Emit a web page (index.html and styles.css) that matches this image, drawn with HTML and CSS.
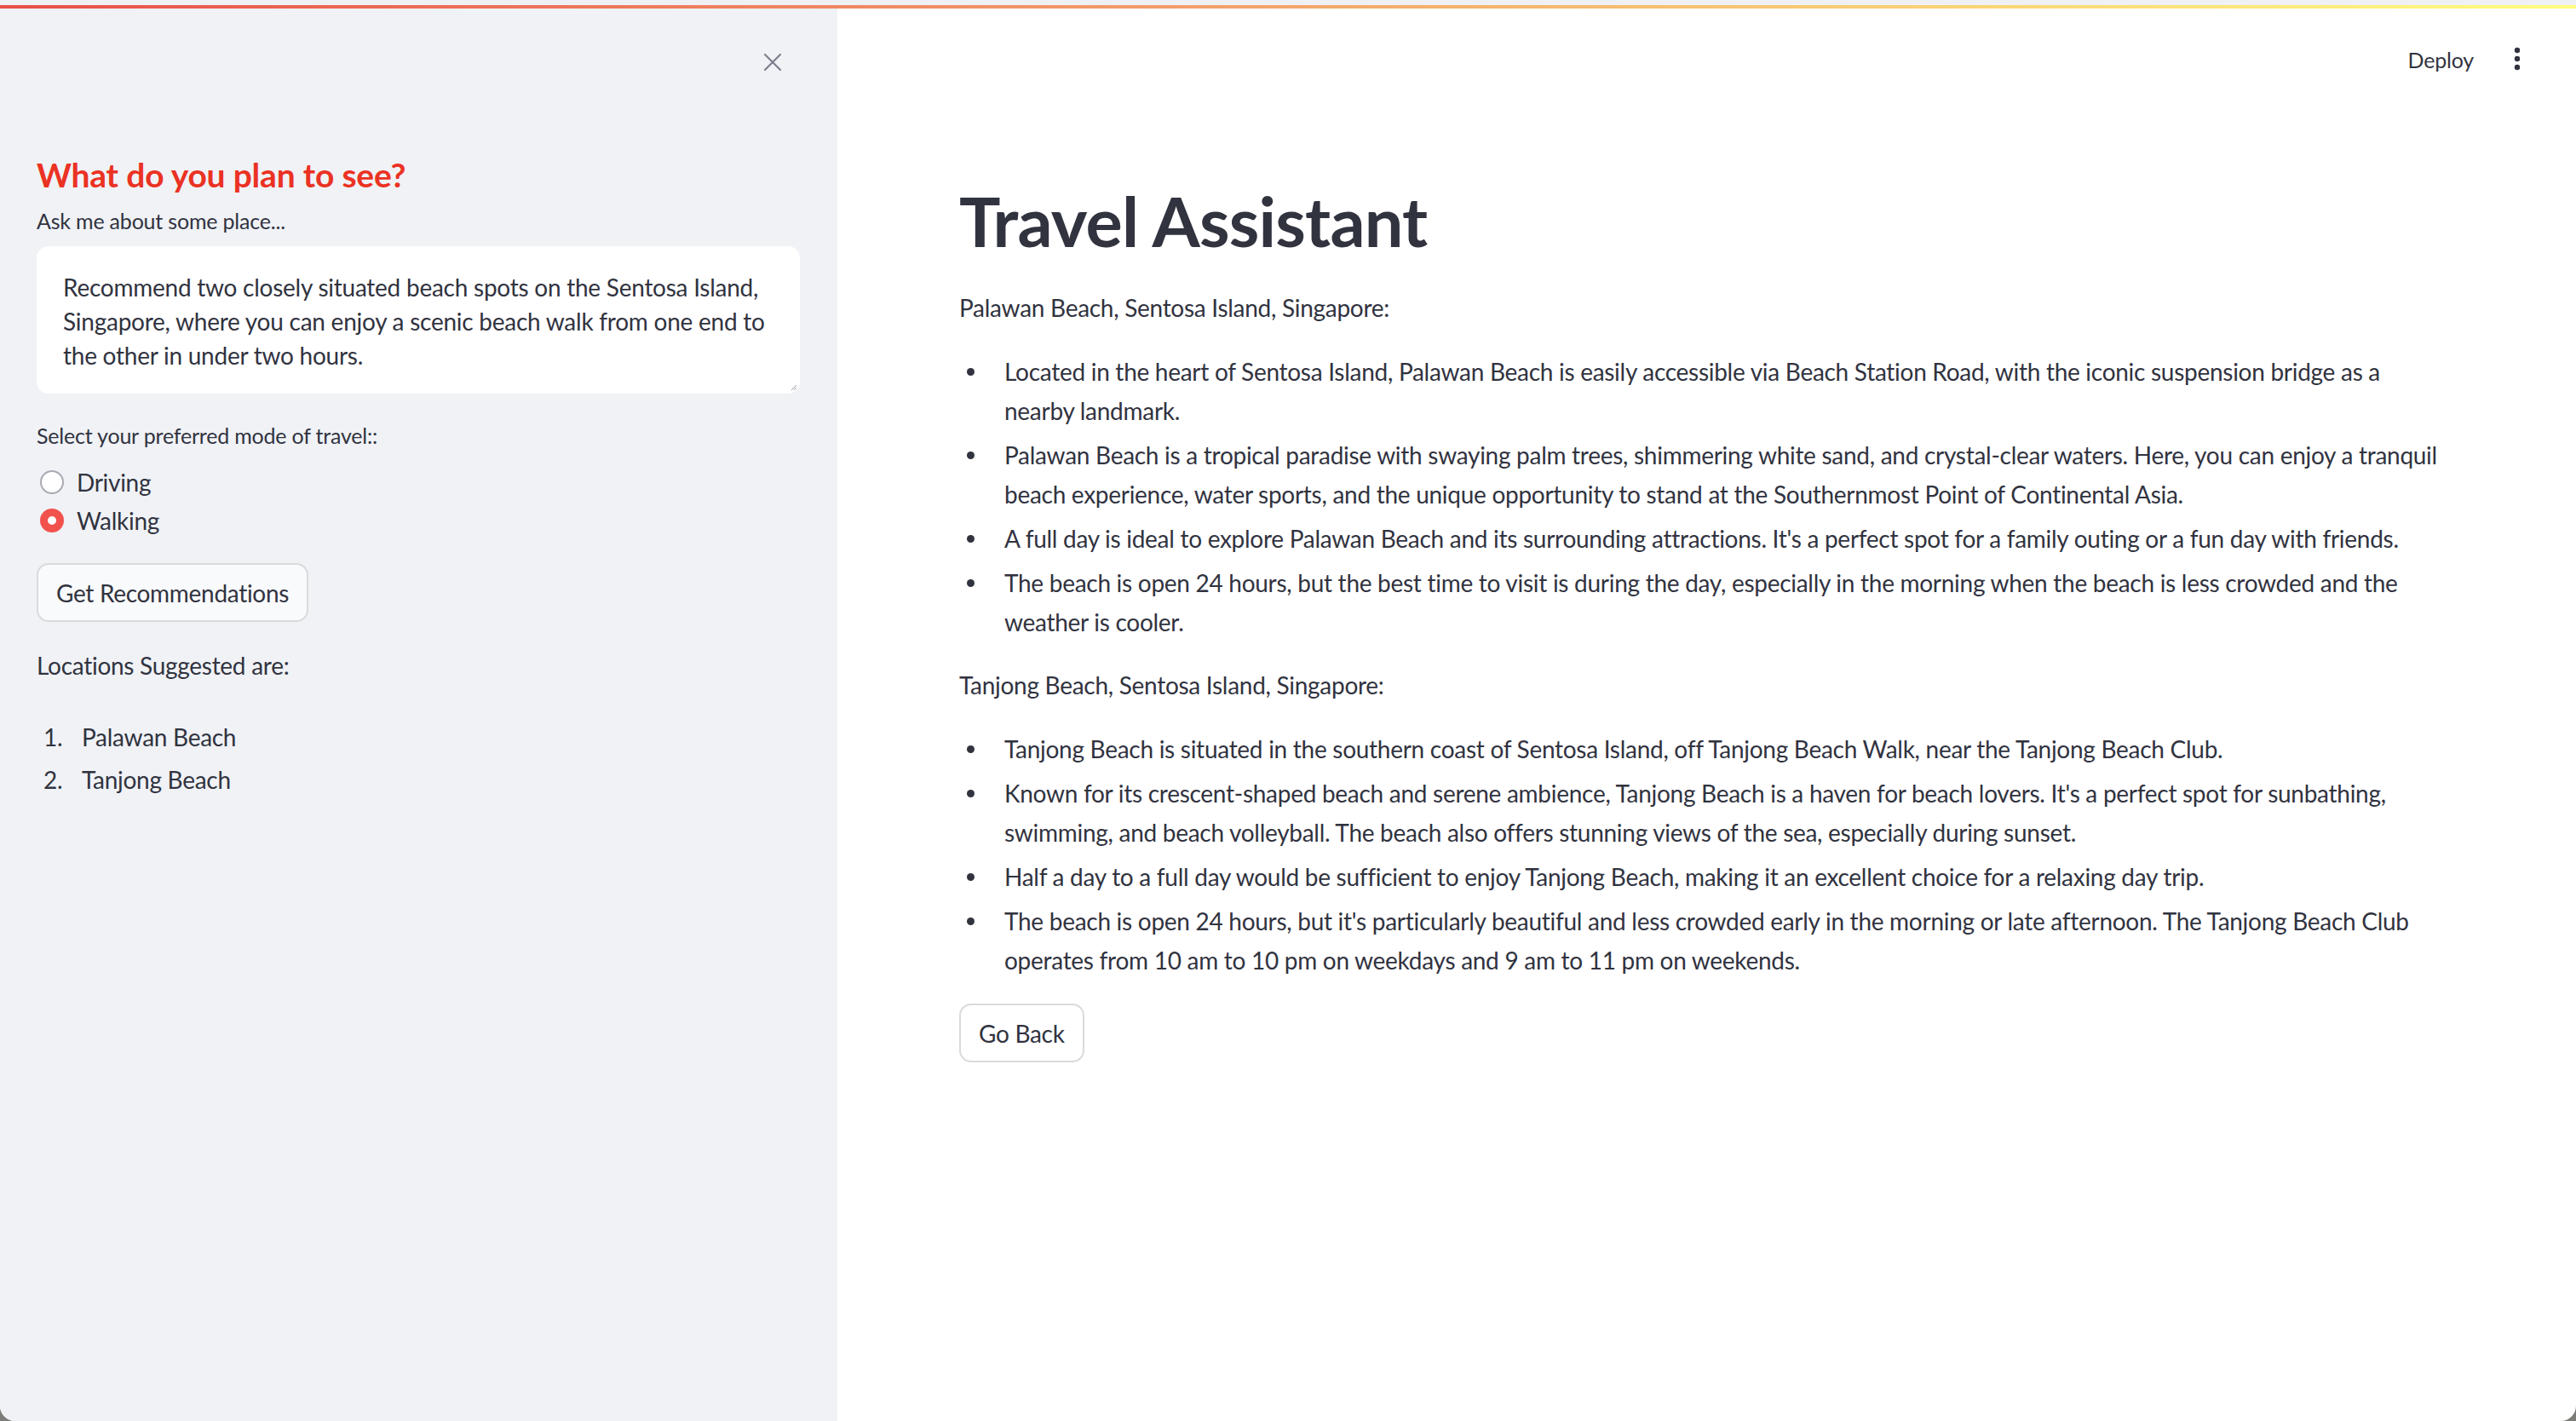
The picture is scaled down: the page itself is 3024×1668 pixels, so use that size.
FILE: index.html
```html
<!DOCTYPE html>
<html lang="en">
<head>
<meta charset="utf-8">
<title>Travel Assistant</title>
<link rel="stylesheet" href="styles.css">
</head>
<body>
<div class="window">
  <div class="topstrip"></div>
  <div class="decoration"></div>
  <div class="app">
    <aside class="sidebar">
      <div class="sidebar-head">
        <svg class="close" width="22" height="22" viewBox="0 0 22 22" aria-label="Close">
          <path d="M2 2 L20 20 M20 2 L2 20" stroke="#7d808c" stroke-width="2.2" stroke-linecap="round" fill="none"/>
        </svg>
      </div>
      <h2 class="side-title">What do you plan to see?</h2>
      <div class="field-label">Ask me about some place...</div>
      <div class="textarea">Recommend two closely situated beach spots on the Sentosa Island, Singapore, where you can enjoy a scenic beach walk from one end to the other in under two hours.<svg class="resize" width="10" height="10" viewBox="0 0 10 10"><path d="M9 3 L3 9 M9 6 L6 9" stroke="#9a9ca3" stroke-width="1"/></svg></div>
      <div class="field-label radio-label">Select your preferred mode of travel::</div>
      <div class="radio-group">
        <div class="radio-row"><span class="radio"></span><span>Driving</span></div>
        <div class="radio-row"><span class="radio checked"></span><span>Walking</span></div>
      </div>
      <div class="side-btn-wrap"><button class="btn side-btn">Get Recommendations</button></div>
      <p class="side-text">Locations Suggested are:</p>
      <ol class="side-list">
        <li><span class="num">1.</span><span>Palawan Beach</span></li>
        <li><span class="num">2.</span><span>Tanjong Beach</span></li>
      </ol>
    </aside>
    <main class="main">
      <header class="main-head">
        <span class="deploy">Deploy</span>
        <svg class="menu" width="8" height="28" viewBox="0 0 8 28" aria-label="Menu">
          <circle cx="4" cy="4" r="3.2" fill="#31333f"/>
          <circle cx="4" cy="14" r="3.2" fill="#31333f"/>
          <circle cx="4" cy="24" r="3.2" fill="#31333f"/>
        </svg>
      </header>
      <div class="block">
        <h1 class="title">Travel Assistant</h1>
        <p class="para">Palawan Beach, Sentosa Island, Singapore:</p>
        <ul class="bullets">
          <li>Located in the heart of Sentosa Island, Palawan Beach is easily accessible via Beach Station Road, with the iconic suspension bridge as a nearby landmark.</li>
          <li>Palawan Beach is a tropical paradise with swaying palm trees, shimmering white sand, and crystal-clear waters. Here, you can enjoy a tranquil beach experience, water sports, and the unique opportunity to stand at the Southernmost Point of Continental Asia.</li>
          <li>A full day is ideal to explore Palawan Beach and its surrounding attractions. It's a perfect spot for a family outing or a fun day with friends.</li>
          <li>The beach is open 24 hours, but the best time to visit is during the day, especially in the morning when the beach is less crowded and the weather is cooler.</li>
        </ul>
        <p class="para">Tanjong Beach, Sentosa Island, Singapore:</p>
        <ul class="bullets">
          <li>Tanjong Beach is situated in the southern coast of Sentosa Island, off Tanjong Beach Walk, near the Tanjong Beach Club.</li>
          <li>Known for its crescent-shaped beach and serene ambience, Tanjong Beach is a haven for beach lovers. It's a perfect spot for sunbathing, swimming, and beach volleyball. The beach also offers stunning views of the sea, especially during sunset.</li>
          <li>Half a day to a full day would be sufficient to enjoy Tanjong Beach, making it an excellent choice for a relaxing day trip.</li>
          <li>The beach is open 24 hours, but it's particularly beautiful and less crowded early in the morning or late afternoon. The Tanjong Beach Club operates from 10 am to 10 pm on weekdays and 9 am to 11 pm on weekends.</li>
        </ul>
        <div class="main-btn-wrap"><button class="btn main-btn">Go Back</button></div>
      </div>
    </main>
  </div>
</div>
</body>
</html>
```
FILE: styles.css
```css
* { box-sizing: border-box; }
html, body { margin: 0; padding: 0; }
body {
  background: #7c7c78;
  font-family: "Lato", "Noto Sans", sans-serif;
  color: #31333f;
  width: 3024px;
  height: 1668px;
  overflow: hidden;
}
.window {
  width: 3024px;
  height: 1668px;
  background: #ffffff;
  border-radius: 0 0 18px 18px;
  overflow: hidden;
  display: flex;
  flex-direction: column;
}
.topstrip { height: 6px; background: #f0f1f4; flex: none; }
.decoration {
  height: 4px;
  flex: none;
  background: linear-gradient(90deg, rgb(232, 80, 72), rgb(240, 140, 100) 35%, rgb(255, 253, 128));
}
.app { flex: 1; display: flex; min-height: 0; }

/* Sidebar */
.sidebar {
  width: 983px;
  flex: none;
  background: #f0f2f6;
  padding: 0 44px 0 43px;
  display: flex;
  flex-direction: column;
}
.sidebar-head {
  display: flex;
  justify-content: flex-end;
  padding: 52px 21px 0 0;
  height: 74px;
}
.close { display: block; }
.side-title {
  margin: 98px 0 0 0;
  font-size: 39px;
  line-height: 47px;
  font-weight: 700;
  color: #eb3223;
  letter-spacing: -0.2px;
}
.field-label {
  margin-top: 15px;
  font-size: 25px;
  line-height: 30px;
  letter-spacing: -0.2px;
}
.textarea {
  position: relative;
  margin-top: 15px;
  background: #ffffff;
  border-radius: 14px;
  height: 173px;
  padding: 28px 30px 0 31px;
  font-size: 28px;
  line-height: 40px;
  letter-spacing: -0.25px;
}
.resize { position: absolute; right: 3px; bottom: 3px; }
.radio-label { margin-top: 34px; }
.radio-group { margin-top: 17px; display: flex; flex-direction: column; }
.radio-row {
  display: flex;
  align-items: center;
  height: 45px;
  font-size: 28px;
  letter-spacing: -0.3px;
  padding-left: 4px;
  gap: 15px;
}
.radio {
  width: 28px;
  height: 28px;
  border-radius: 50%;
  border: 2px solid #a9abb3;
  background: #ffffff;
  flex: none;
}
.radio.checked {
  border: 9px solid #f2524c;
  background: #ffffff;
}
.side-btn-wrap { margin-top: 28px; }
.btn {
  font-family: "Lato", "Noto Sans", sans-serif;
  font-size: 28px;
  color: #31333f;
  height: 69px;
  line-height: 46px;
  padding: 0 21px;
  border-radius: 14px;
  border: 2px solid #d9dadd;
  letter-spacing: -0.3px;
  cursor: pointer;
}
.side-btn { background: #f9fafb; width: 319px; padding: 0; }
.side-text {
  margin: 28px 0 0 0;
  font-size: 28px;
  line-height: 46px;
  letter-spacing: -0.28px;
}
.side-list {
  list-style: none;
  margin: 38px 0 0 0;
  padding: 0 0 0 8px;
  font-size: 28px;
  line-height: 46px;
  letter-spacing: -0.28px;
}
.side-list li { display: flex; }
.side-list li + li { margin-top: 4px; }
.side-list .num { width: 45px; flex: none; }

/* Main */
.main { flex: 1; display: flex; flex-direction: column; min-width: 0; }
.main-head {
  display: flex;
  justify-content: flex-end;
  align-items: center;
  gap: 47px;
  padding: 46px 65px 0 0;
  height: 74px;
}
.deploy { font-size: 25px; line-height: 30px; letter-spacing: -0.2px; }
.menu { display: block; margin-top: -2px; }
.block { padding: 127px 150px 0 143px; }
.title {
  margin: 0;
  font-size: 81px;
  line-height: 96px;
  font-weight: 700;
  letter-spacing: -0.8px;
}
.para {
  margin: 31px 0 0 0;
  font-size: 28px;
  line-height: 46px;
  letter-spacing: -0.28px;
}
.bullets {
  list-style: none;
  margin: 29px 0 0 0;
  padding: 0 0 0 53px;
  font-size: 28px;
  line-height: 46px;
  letter-spacing: -0.28px;
}
.bullets li { position: relative; }
.bullets li + li { margin-top: 6px; }
.bullets li::before {
  content: "";
  position: absolute;
  left: -44px;
  top: 19px;
  width: 9px;
  height: 9px;
  border-radius: 50%;
  background: #31333f;
}
.bullets + .para { margin-top: 28px; }
.main-btn-wrap { margin-top: 28px; }
.main-btn { background: #ffffff; }
```
